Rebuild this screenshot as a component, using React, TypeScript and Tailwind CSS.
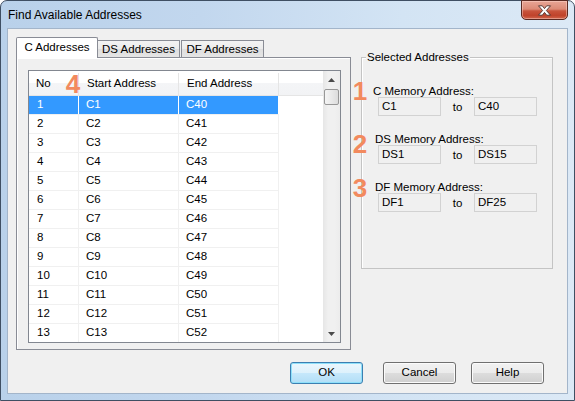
import React from "react";

const rows = Array.from({ length: 13 }, (_, i) => i + 1);

function CloseButton() {
  return (
    <div className="absolute top-[-1px] right-[6px] w-[47px] h-[20px] rounded-b-[5px] border border-[#5a2a22] bg-[linear-gradient(to_bottom,#e8a696_0%,#dc8a76_45%,#c8543c_55%,#c0432b_80%,#d0654c_100%)] flex items-center justify-center shadow-[inset_0_0_0_1px_rgba(255,220,210,0.45)]">
      <svg width="15" height="11" viewBox="0 0 15 11">
        <path
          d="M1.5 0.8 L5.3 0.8 L7.5 3.6 L9.7 0.8 L13.5 0.8 L9.4 5.5 L13.5 10.2 L9.7 10.2 L7.5 7.4 L5.3 10.2 L1.5 10.2 L5.6 5.5 Z"
          fill="#ffffff"
          stroke="#4a2f2a"
          strokeWidth="0.9"
          strokeLinejoin="round"
        />
      </svg>
    </div>
  );
}

function Arrow({ up }: { up: boolean }) {
  return (
    <div className="h-[17px] flex items-center justify-center">
      <svg width="7" height="4" viewBox="0 0 7 4">
        {up ? (
          <path d="M0 4 L3.5 0 L7 4 Z" fill="#4a4a4a" />
        ) : (
          <path d="M0 0 L7 0 L3.5 4 Z" fill="#4a4a4a" />
        )}
      </svg>
    </div>
  );
}

function TextBox({ value }: { value: string }) {
  return (
    <div className="w-[63px] h-[19px] border border-[#d2d2d2] bg-[#f0f0f0] pl-[3px] flex items-center leading-none">
      {value}
    </div>
  );
}

function Section({ label, a, b, labelPad }: { label: string; a: string; b: string; labelPad: string }) {
  return (
    <div className="flex flex-col">
      <div className={`h-[12px] leading-[12px] ${labelPad}`}>{label}</div>
      <div className="flex pl-[16px]">
        <TextBox value={a} />
        <div className="w-[33px] text-center pt-[4px] leading-[12px]">to</div>
        <TextBox value={b} />
      </div>
    </div>
  );
}

function Btn({ label, focus }: { label: string; focus?: boolean }) {
  return (
    <div
      className={
        focus
          ? "w-[73px] h-[22px] rounded-[3px] border border-[#3c7fb1] bg-[linear-gradient(to_bottom,#ecf7fd_0%,#ddf1fc_50%,#c6e8fb_50%,#b2def6_100%)] shadow-[inset_0_0_0_1px_#8ee0fa] flex items-center justify-center"
          : "w-[73px] h-[22px] rounded-[3px] border border-[#707070] bg-[linear-gradient(to_bottom,#f2f2f2_0%,#ebebeb_50%,#dddddd_50%,#cfcfcf_100%)] shadow-[inset_0_0_0_1px_#fbfbfb] flex items-center justify-center"
      }
    >
      {label}
    </div>
  );
}

export default function App() {
  return (
    <div className="w-[575px] h-[401px] bg-white font-['Liberation_Sans',Arial,sans-serif] text-[11.5px] text-black">
      <div className="relative w-full h-full flex flex-col rounded-t-[7px] border border-[#3f4f63] bg-[linear-gradient(90deg,#b9d1ea_0%,#c2d7ee_35%,#d3e4f4_70%,#dce9f6_100%)]">
        <div className="h-[27px] shrink-0 flex items-center pl-[7px] pt-[1px] text-[12px]">
          Find Available Addresses
        </div>
        <CloseButton />
        <div className="flex-1 mx-[6px] mb-[6px] border border-[#a3b5ca] bg-[#f0f0f0] flex flex-col">
          <div className="flex pt-[8px] pl-[8px]">
            {/* left: tab control */}
            <div className="w-[335px] flex flex-col">
              <div className="h-[20px] flex items-end">
                <div className="relative z-10 w-[82px] h-[21px] mb-[-1px] border-t border-l border-r border-[#898c95] bg-white rounded-t-[2px] flex items-center justify-center">
                  C Addresses
                </div>
                <div className="w-[82px] h-[17px] border-t border-r border-[#898c95] bg-[linear-gradient(to_bottom,#f3f3f3_0%,#ebebeb_50%,#dedede_50%,#e5e5e5_100%)] flex items-center justify-center pt-[2px]">
                  DS Addresses
                </div>
                <div className="ml-[1px] w-[83px] h-[17px] border-t border-l border-r border-[#898c95] bg-[linear-gradient(to_bottom,#f3f3f3_0%,#ebebeb_50%,#dedede_50%,#e5e5e5_100%)] flex items-center justify-center pt-[2px]">
                  DF Addresses
                </div>
              </div>
              <div className="h-[293px] border border-[#898c95] bg-[#f0f0f0] shadow-[inset_1px_1px_0_#ffffff] pl-[11px] pt-[12px]">
                <div className="w-[313px] h-[273px] border border-[#828790] bg-white flex">
                  <div className="w-[294px] flex flex-col overflow-hidden">
                    <div className="h-[25px] shrink-0 flex border-b border-[#e5e5e5] bg-[linear-gradient(to_bottom,#ffffff_0%,#ffffff_50%,#f4f5f7_50%,#f2f3f5_100%)] pt-[2px]">
                      <div className="w-[50px] pl-[7px] border-r border-[#e5e5e5] flex items-center">No</div>
                      <div className="w-[100px] pl-[8px] border-r border-[#e5e5e5] flex items-center">Start Address</div>
                      <div className="w-[100px] pl-[8px] border-r border-[#e5e5e5] flex items-center">End Address</div>
                      <div className="flex-1" />
                    </div>
                    {rows.map((n) => {
                      const sel = n === 1;
                      const cell = sel
                        ? "border-r border-white bg-[#3399ff] text-white flex items-center"
                        : "border-r border-[#f0f0f0] flex items-center";
                      return (
                        <div key={n} className="w-[250px] h-[19px] shrink-0 flex border-b border-[#f0f0f0]">
                          <div className={`w-[50px] pl-[8px] ${cell}`}>{n}</div>
                          <div className={`w-[100px] pl-[7px] ${cell}`}>C{n}</div>
                          <div className={`w-[100px] pl-[7px] ${cell}`}>C{n + 39}</div>
                        </div>
                      );
                    })}
                  </div>
                  <div className="w-[17px] flex flex-col bg-[linear-gradient(to_right,#e6e6e6_0%,#f0f0f0_30%,#f0f0f0_70%,#ececec_100%)]">
                    <Arrow up />
                    <div className="mx-[1px] mt-[1px] h-[16px] rounded-[2px] border border-[#979797] bg-[linear-gradient(to_right,#f4f4f4_0%,#e9e9e9_50%,#dcdcdc_100%)]" />
                    <div className="flex-1" />
                    <Arrow up={false} />
                  </div>
                </div>
              </div>
            </div>
            {/* right: group box */}
            <div className="ml-[10px] mt-[20px] w-[192px] h-[212px] relative border border-[#c4c4c4] shadow-[inset_1px_1px_0_#ffffff]">
              <span className="absolute left-[4px] top-[-7px] px-[1px] bg-[#f0f0f0] leading-[13px]">
                Selected Addresses
              </span>
              <div className="flex flex-col gap-[17px] pt-[27px]">
                <Section label="C Memory Address:" a="C1" b="C40" labelPad="pl-[11px]" />
                <Section label="DS Memory Address:" a="DS1" b="DS15" labelPad="pl-[13px]" />
                <Section label="DF Memory Address:" a="DF1" b="DF25" labelPad="pl-[13px]" />
              </div>
            </div>
          </div>
          <div className="flex justify-end pr-[23px] mt-[12px]">
            <Btn label="OK" focus />
            <div className="w-[20px]" />
            <Btn label="Cancel" />
            <div className="w-[15px]" />
            <Btn label="Help" />
          </div>
        </div>
        {/* annotations */}
        <span className="absolute left-[62px] top-[70px] w-[20px] text-center font-bold text-[26px] leading-none text-[#f28a5e]">4</span>
        <span className="absolute left-[349px] top-[77px] w-[20px] text-center font-bold text-[26px] leading-none text-[#f28a5e]">1</span>
        <span className="absolute left-[349px] top-[130px] w-[20px] text-center font-bold text-[26px] leading-none text-[#f28a5e]">2</span>
        <span className="absolute left-[349px] top-[174px] w-[20px] text-center font-bold text-[26px] leading-none text-[#f28a5e]">3</span>
      </div>
    </div>
  );
}
